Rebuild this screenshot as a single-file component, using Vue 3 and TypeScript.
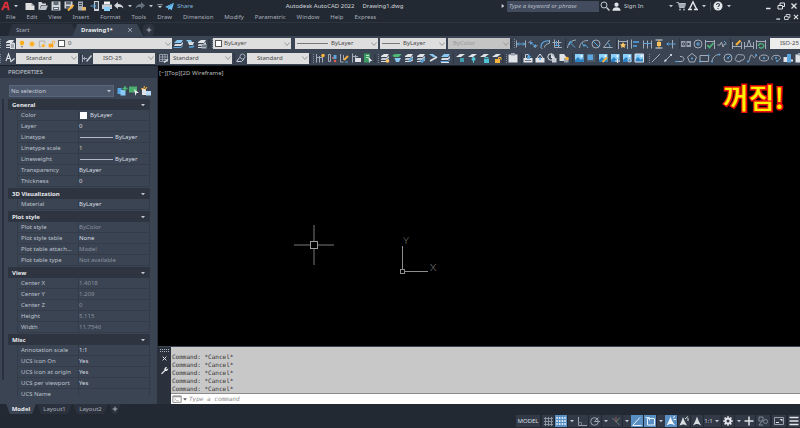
<script setup lang="ts">
import { ref } from 'vue'

interface Row { label: string; value: string; dim?: boolean; line?: boolean; swatch?: boolean; warm?: boolean }
interface Section { title: string; rows: Row[] }
interface StatusItem { icon: string; name: string; on?: boolean; drop?: boolean }

const G = '#a2abb7'
const B = '#5ba6de'
const Y = '#f7b23c'
const GR = '#4fb877'

const line = (d: string, c = G, w = 1): string =>
  `<path d="${d}" fill="none" stroke="${c}" stroke-width="${w}"/>`
const fill = (d: string, c = G): string => `<path d="${d}" fill="${c}"/>`
const ring = (x: number, y: number, r: number, c = G): string =>
  `<circle cx="${x}" cy="${y}" r="${r}" fill="none" stroke="${c}"/>`
const dot = (x: number, y: number, r: number, c = B): string =>
  `<circle cx="${x}" cy="${y}" r="${r}" fill="${c}"/>`

const sheets = fill('M2 4l3-2h5l-2 3H2z', '#e2e5e8') + fill('M2 7l1-1h4l3-2v2L7 8H2z', '#c3c9d0') + fill('M2 10V9h5l3-2v1.500L7 10z', '#d8dce0')
const blueSheets = fill('M2 5l3-3h6L9 5z', '#8bc9f5') + fill('M2 8l1-2h6l2-2v2L9 8z', '#d8dce0') + fill('M1 10l1-1h7l2-2v1l-2 2z', B)
const flatSheet = fill('M2 5l4-3h5L7 5z', '#e2e5e8')
const picture = fill('M2 2h8.500v8H2z', '#8bd0fa') + fill('M2 10V8l3-3 3 3 1-1.500 1.500 1.500v2z', '#2b82c4') + dot(8.500, 4, 1, '#fff')
const dimBase = line('M1.500 2v9M10.500 2v9M2 3.500h8')

const glyphs: Record<string, string> = {
  newFile: fill('M1.500 3h6l3 3v4h-9z', '#e0e0e0') + fill('M7.500 3v3h3z', '#9aa2ac'),
  open: fill('M1.500 2h3l1 1.500H9V5H4L2.500 10h-1z', '#d5d9dd') + fill('M4.500 5.500H11L9 10H2.500z', '#b9c0c7'),
  save: fill('M1.500 1.500h9v9h-9z', '#d0d4d8') + fill('M3.500 1.500h5V5h-5zM3 7h6v3.500H3z', '#606b78') + fill('M4 8h4v1H4z', '#e7eaed'),
  saveAs: fill('M1.500 1.500h8v7h-8z', '#d0d4d8') + fill('M3 1.500h5v3H3zM3 6h4v3H3z', '#606b78') + line('M5 10.500L10.500 5', Y, 2),
  webOpen: fill('M2 1.500h5v9H2z', '#a4acb6') + fill('M3 3h3v1H3zM3 5h3v1H3z', '#3a4452') + fill('M6 7h4v3.500H6z', '#e2b66d'),
  webSave: fill('M5 1h5v10H5z', '#cbd0d6') + fill('M6 2h3v7H6z', '#3b4554') + line('M1.500 6h5M4.500 4l2 2-2 2', B),
  print: fill('M3 1.500h6v3H3z', '#f1f1f1') + fill('M1 4.500h10V9H1z', '#c8cdd3') + fill('M3 7h6v4H3z', '#8bd0fa'),
  undo: fill('M1 5.500L5 2v2c3 0 5 1.500 5.500 4.500C9 7 7.500 6.800 5 7v2z', '#d0d5da'),
  redo: fill('M11 5.500L7 2v2C4 4 2 5.500 1.500 8.500 3 7 4.500 6.800 7 7v2z', '#66707d'),
  custom: line('M2 4h8', '#d0d5da') + fill('M3 6h6L6 9z', '#d0d5da'),
  plane: fill('M0 6.500L12 1 9 11 6 9 4.500 11 4 8z', '#6cc0f5') + line('M4 8l6-5.500', '#2a6f9e', .7),
  drop: fill('M3 4.500h6L6 8z', '#c3c9d0'),
  play: fill('M4 3l4 3-4 3z', '#d5d9dd'),
  search: ring(5, 5, 3, '#c3c9d0') + line('M7.500 7.500l3 3', '#c3c9d0', 1.500),
  user: dot(6, 4, 2.300, '#dfe3e7') + fill('M1.500 10.500c0-5 9-5 9 0z', '#dfe3e7'),
  cart: line('M1.500 2.500h2l1 5h5l1-4H4', '#b4bcc6') + fill('M4 4h6L9.500 7H4.500z') + dot(5, 9.500, 1, G) + dot(9, 9.500, 1, G),
  apps: line('M2 10L6 2l4 8M1 9.500h4M7 9.500h4', '#e3e6e9', 1.500),
  help: dot(6, 6, 4.500, '#e3e6e9') + line('M4.500 5c0-2 3-2 3 0 0 1-1.500 1-1.500 2M6 8v1', '#333c49', 1.100),
  min: line('M4 8.500h4.500', '#e3e6e9', 1.500),
  restore: line('M3 5.500h4.500v3.500H3zM5 5V3h4.500v3.500H8', '#e3e6e9'),
  close: line('M3.500 3.500l5 5M8.500 3.500l-5 5', '#e3e6e9', 1.300),
  closeDim: line('M3 3l6 6M9 3L3 9', '#a8b0ba', 1.200),
  plus: line('M6 2.500v7M2.500 6h7', '#aab2bc', 1.500),
  layerProps: sheets + fill('M6 5h5v6H6z', '#d8dce0') + line('M7 7h3M7 9h3', '#555f6d', .8),
  layerA: blueSheets,
  layerB: fill('M2 2h5l1 2H4z', '#8bc9f5') + fill('M4 4h6L9 7H5z', '#d8dce0') + line('M5 9h3l2-1', B, 1.500),
  layerC: sheets + fill('M5.500 6h5v4.500h-5z', '#aab2bc') + line('M6 8h4', '#3b4453'),
  bulb: fill('M6 1C2 1 2 5 4 7v1h4V7c2-2 2-6-2-6z', '#ffae1b') + fill('M4.500 9h3v2h-3z', '#8d8d8d'),
  sun: dot(6, 6, 3, '#ffae1b') + line('M6 1v10M1 6h10M2.500 2.500l7 7M9.500 2.500l-7 7', '#ffae1b', .9),
  freeze: line('M2 1.500h8.500v4M2 2v8h3', '#8b8b8b', .8) + dot(8, 8.500, 2, '#ffae1b') + line('M8 5.500v6M5 8.500h6', '#ffae1b', .7),
  lock: fill('M1 5.500h7V11H1z', '#ffa21b') + line('M6.500 5.500V3c0-2 3.500-2 3.500 0v2', '#ffa21b', 1.200),
  textStyle: line('M2 9l2.500-7L7 9M3 6.500h3', '#dfe3e7', 1.100) + line('M6.500 10L10.500 6.500', '#dfe3e7', 1.200),
  dimStyle: line('M1.500 3v7M2 6.500h4M4 5L2.500 6.500 4 8', G) + line('M5.500 9.500l5-6', '#c8cdd3', 1.500),
  tableStyle: line('M1.500 2.500h8v7h-8zM1.500 5h8M1.500 7.500h8M4.500 2.500v7M7 2.500v7', G, .8) + line('M6 10.500l4-3', '#dfe3e7', 1.300),
  leaderStyle: ring(7.500, 4.500, 2.500) + line('M1.500 9.500l3-4M2 9.500h4.500L9 7', '#c8cdd3'),
  dLinear: line('M1.500 2.500v7M10.500 2.500v7') + line('M2 6h8M4 4.500L2.500 6 4 7.500M8 4.500L9.500 6 8 7.500', B),
  dAligned: line('M1.500 5L4 2.500M7.500 10L10.500 7') + line('M3.500 4.500l5 4M3.500 6.500v-2h2M6.500 8.500h2v-2', B),
  dArc: line('M1.500 9.500l2 1M10.500 2v3') + line('M2 9C2 5 5 2.500 10 3', B, 1.200) + line('M5.500 9.500c0-2 2-4 5-4'),
  dOrd: line('M3.500 1.500v8H11M1.500 4.500h9M7.500 2v7.500') + line('M4 7.500h5M5.500 3v5', B),
  dRadius: line('M1.500 10C2 5 5 2.500 10 2') + line('M3.500 4l5.500 5.500M3.500 7V4h3', B),
  dJog: line('M1.500 10C2 5 5 2.500 10 2.500') + line('M4 4.500l2 4 1-2 3 3.500', B),
  dDia: ring(6, 6, 4) + line('M3 3l6 6', B),
  dAng: line('M1.500 9.500h9M1.500 9.500L7.500 2') + line('M5 4.500c2 1 3 3 3 5', B),
  quick: dimBase + fill('M6 4l1 2 2 .500-1.500 1.500.500 2L6 9l-2 1 .500-2L3 6.500 5 6z', '#ffc766'),
  baseline: line('M2.500 1.500v9') + fill('M4 3h6v2H4zM4 7h4v2H4z', '#4c8fc4'),
  cont: line('M2.500 2.500v8M6.500 2.500v8M10.500 2.500v8') + line('M3 5.500h7', B),
  space: line('M2.500 2h7M2.500 10h7', G, 1.500) + fill('M4 4h4v4H4z', '#ffc766') + line('M6 2v8', Y),
  brk: line('M7.500 2v8.500') + line('M1.500 6h9M3.500 4.500L2 6l1.500 1.500', B),
  tol: fill('M1 3h10v6H1z', '#98a1ad') + line('M6 3v6', '#38414f') + ring(3.500, 6, 1.200, '#38414f') + fill('M7.500 5h2v2h-2z', '#38414f'),
  center: ring(6, 6, 4) + line('M6 4v4M4 6h4', B),
  inspect: dimBase + line('M3.500 7l2 2.500L9.500 5', GR, 1.700),
  jogLine: line('M1.500 7h2.500l1.500-3 1.500 5 1.500-3h2') + line('M8 3l2 2', B),
  dEdit: line('M1.500 4v7M10.500 4v7M2 8.500h8') + line('M5 7l4.500-4.500', Y, 2),
  tEdit: line('M1.500 4v7M10.500 4v7M2 8.500h8M4 8l2-6 2 6'),
  update: dimBase + line('M3.500 8c0-3 4-3 5-1M9 7c0 3-3 4-5 2', GR, 1.300),
  rA: line('M2.500 2v8.500M5.500 4v6.500M8.500 5v5.500M3 5.500h5') + dot(9, 3.500, 1.800, Y),
  rB: line('M2.500 2.500h2v7h-2z') + line('M6 6h3', '#e0604c', 1.500) + fill('M7.500 3h3v4h-3z', B) + dot(9, 9, 1.300, '#e0604c'),
  rC: line('M2.500 2v8h3M5.500 3v5') + line('M6 8l4-4', Y, 1.800) + line('M7 10h3', B),
  rD: line('M2.500 1.500v9M5.500 3v5M3 4.500h5') + fill('M5 6h6v4H5z', '#dfe3e7'),
  rE: fill('M2 1.500h6v9H2z', '#3b9a62') + line('M4 3.500h3M4 5.500h2', '#bfe4cd') + fill('M6 4.500l4.500 4.500H8.500l-1 2z', '#dfe3e7'),
  lA: sheets + dot(8.500, 9, 1.800, '#ffc766'),
  lB: fill('M1.500 3l3-1h6L8 5H2.500z', GR) + fill('M3.500 6h6.500L8 10H5z', '#8bc9f5'),
  lC: sheets + line('M6 9l3-3', B, 2),
  lD: sheets + line('M5 8l2 2 3-4', B, 1.500),
  lE: fill('M2 2h4l4 3H6z', '#8bc9f5') + line('M3 9l7-4', '#dfe3e7', 1.800),
  lF: blueSheets + line('M2 10.500h8', '#dfe3e7'),
  fA: flatSheet + fill('M6 6h4v4H6z', '#3f9fae'),
  fB: flatSheet + dot(7.500, 7, 2, '#51c4d3') + line('M7.500 7v4', '#51c4d3'),
  fC: flatSheet + fill('M6 7h5v4H6z', '#51c4d3') + line('M7 7V5.500h3V7', '#51c4d3'),
  fD: flatSheet + fill('M5 7h5v4H5z', Y) + line('M8.500 7V5.500h2.500V8', Y),
  clip: fill('M1.500 2.500h9v8h-9z', '#dfe3e7') + fill('M4 1h4v2.500H4z', '#98a1ad'),
  cA: fill('M1.500 6h9v4.500h-9z', '#dfe3e7') + line('M3.500 6V2.500h3V6', '#c8cdd3') + fill('M6 2l3.500 3H8v2H5z', B) + line('M3 8.500h6', '#6b7583'),
  cB: fill('M1.500 6h9v4.500h-9z', '#dfe3e7') + line('M3 6l3-4 3 4', '#dfe3e7') + line('M6 5v3', B, 1.500),
  cC: ring(5, 5, 3.200, '#dfe3e7') + fill('M5 1.500L9 6H5z', '#dfe3e7') + fill('M6 6h4.500v4.500H6z', '#c8cdd3'),
  cD: fill('M1.500 2h4.500l3 4v3H1.500z', '#dfe3e7') + fill('M6 6h4.500v4.500H6z', '#98a1ad') + dot(9, 6.500, 1.800, Y),
  pA: picture,
  pB: fill('M2 2h8.500v8H2z', '#4f5a69') + fill('M2.500 2.500h5.500v5.500H2.500z', B),
  pC: picture + line('M5.500 10l4.500-4.500', Y, 2),
  pD: picture + line('M6 9h5M8.500 6.500v4.500', '#dfe3e7', 1.200),
  pE: picture + dot(8.500, 8.500, 2, '#c8cdd3') + dot(8.500, 8.500, 1, '#2b82c4'),
  pF: picture + line('M2 2h8.500v8H2z', '#dfe3e7'),
  segment: line('M2 10l8-8'),
  xline: line('M2 10l8-8') + dot(3.500, 8.500, 1.100, '#dfe3e7') + dot(9, 3, 1.100, '#dfe3e7'),
  pline: line('M1.500 9.500H7c4 0 4-5 0-5H6') + line('M1.500 9.500H5', B),
  poly: line('M6 1.500l4.500 3.500-2 5h-5l-2-5z') + dot(6, 6.500, 1),
  rect: line('M2 3.500h8.500v6H2z') + dot(2, 9.500, 1) + dot(10.500, 3.500, 1),
  arc: line('M2 10C2 6 5 2.500 10 2.500') + dot(2, 9.500, 1) + dot(9.500, 2.500, 1),
  circle: ring(6, 6, 4) + line('M6 6l3-3', B) + dot(6, 6, 1),
  cloud: line('M3 9C.500 9 1 6 2 6c0-4 4-4 5-3 3-1 4.500 2 3 4-1 2-3 1-3 1l-1 2z'),
  spline: line('M2 9.500C4 9.500 3.500 3 5.500 3s2 6 5 0') + dot(2, 9.500, 1) + dot(10, 3, 1),
  ellipse: `<ellipse cx="6" cy="6" rx="4.500" ry="3" fill="none" stroke="${G}"/>` + dot(6, 6, 1),
  elArc: line('M2.500 8C0 5 4 2.500 8 3.500s2.500 4-.500 5.500') + dot(6, 6, 1) + dot(7, 9, 1),
  insert: fill('M1.500 5h5v5h-5z', '#dfe3e7') + fill('M5 2h4v8.500H5z', B) + line('M9 8.500h2', '#dfe3e7', 2),
  addPick: fill('M1.500 3h4v6h-4z', '#57a9e5') + fill('M4.500 5h5v5.500h-5z', '#8bc9f5') + line('M9 1v5M6.500 3.500h5', GR, 1.500),
  select: fill('M1 1.500h8v6H1z', '#4aae6d') + fill('M6 4l5 4H8.500L7.500 11z', '#e6e9ec'),
  filter: fill('M2 4h4v6H2z', '#e0e3e6') + fill('M6 6h5v4.500H6z', '#b8dcf7') + line('M4 1l1.500 3M1 4l3-1M7 2L5 5', Y),
  wrench: line('M2 10.500l5-5', '#e3e6e9', 1.800) + fill('M6 6.500C5 3 7 1 9.500 1.500L8 3.500 9 4.500l2-1.500c0 3-2 4.500-5 3.500z', '#e3e6e9'),
  prompt: line('M1 2.500h10v7.500H1z', '#7b7b7b') + fill('M1 2h10v2H1z', '#9a9a9a') + line('M3 5.500l1.500 1L3 7.500M5 8h3', '#888', .7),
  grid: line('M2 3.500h9M2 6.500h9M2 9.500h9M3.500 2v9M6.500 2v9M9.500 2v9', '#8a94a1'),
  snap: [3, 6, 9].map(y => [2, 4.700, 7.400, 10].map(x => dot(x, y, .9, '#eaf4fc')).join('')).join(''),
  ortho: line('M2.500 2v8.500H11', '#98a1ad') + line('M2.500 7.500h3v3', '#707b89'),
  polar: ring(5.500, 6.500, 3.800, '#98a1ad') + line('M5.500 6.500h5.500M5.500 6.500l4-4', '#98a1ad'),
  iso: line('M2.500 3l7 7', '#6f7a88') + line('M6 2v5', '#a8545a') + line('M6 7l3.500-4', '#5c8b69'),
  track: line('M2 10l7-7.500M1.500 10.500h9', '#e6f1fa'),
  osnap: line('M3.500 3.500h7v6.500h-7z', '#e6f1fa') + line('M1.500 2.500h4v3', '#cfe5f7'),
  annoA: fill('M5.500 1.500L7 5.500l3 5L7 9H4.500L1.500 10.500 4 5.500z', '#f1f6fa') + line('M8 2.500l2-1M8.500 4.500H11', '#f1f6fa'),
  annoB: fill('M5 2l1.500 4 2.500 4.500L6 9.500H4.500L1.500 10.500 3.500 6z', '#d9dde1') + line('M7 4l3-2.500M10 3v3', '#d9dde1'),
  annoC: fill('M6 1.500l1.500 4 2.500 5L7 9H5l-3 1.500 2.500-5z', '#d9dde1'),
  gear: ring(6, 6, 2.500, '#e3e6e9').replace('stroke=', 'stroke-width="2" stroke=') + line('M6 1.200v2M6 8.800v2M1.200 6h2M8.800 6h2M2.600 2.600l1.300 1.300M8.100 8.100l1.300 1.300M9.400 2.600L8.100 3.900M3.900 8.100L2.600 9.400', '#e3e6e9', 1.500),
  bigPlus: line('M6 1.500v9M1.500 6h9', '#dfe3e7', 1.500),
  isolate: line('M2 2h4v4H2zM5 6l-3 4h4', '#7e8997') + ring(8.500, 6.500, 2, '#7e8997'),
  clean: line('M1.500 2.500h9v7h-9z', '#98a1ad') + fill('M6.500 4H9.500v2.500z', '#dfe3e7') + line('M3 7.500h3', '#dfe3e7'),
  menu: line('M1.500 2.500h9M1.500 6h9M1.500 9.500h9', '#e3e6e9', 1.300),
}

const fileIcons = ['newFile', 'open', 'save', 'saveAs', 'webOpen', 'webSave', 'print', 'undo']
const menus = ['File', 'Edit', 'View', 'Insert', 'Format', 'Tools', 'Draw', 'Dimension', 'Modify', 'Parametric', 'Window', 'Help', 'Express']

const dimTools = ['dLinear', 'dAligned', 'dArc', 'dOrd', '|', 'dRadius', 'dJog', 'dDia', 'dAng', '|', 'quick', 'baseline', 'cont', 'space', 'brk', '|', 'tol', 'center', 'inspect', 'jogLine', '|', 'dEdit', 'tEdit', 'update']
const rowTools = ['rA', 'rB', 'rC', 'rD', 'rE', ':', 'lA', 'lB', 'lC', 'lD', 'lE', 'lF', '|', 'fA', 'fB', 'fC', 'fD', ':', 'clip', '|', 'cA', 'cB', 'cC', 'cD', '|', 'pA', 'pB', 'pC', 'pD', 'pE', 'pF', ':', 'segment', 'xline', 'pline', 'poly', 'rect', 'arc', 'circle', 'cloud', 'spline', 'ellipse', 'elArc', 'insert', 'clip']

const sections: Section[] = [
  { title: 'General', rows: [
    { label: 'Color', value: 'ByLayer', swatch: true },
    { label: 'Layer', value: '0' },
    { label: 'Linetype', value: 'ByLayer', line: true },
    { label: 'Linetype scale', value: '1', warm: true },
    { label: 'Lineweight', value: 'ByLayer', line: true },
    { label: 'Transparency', value: 'ByLayer' },
    { label: 'Thickness', value: '0' },
  ] },
  { title: '3D Visualization', rows: [{ label: 'Material', value: 'ByLayer' }] },
  { title: 'Plot style', rows: [
    { label: 'Plot style', value: 'ByColor', dim: true },
    { label: 'Plot style table', value: 'None' },
    { label: 'Plot table attach...', value: 'Model', dim: true },
    { label: 'Plot table type', value: 'Not available', dim: true },
  ] },
  { title: 'View', rows: [
    { label: 'Center X', value: '1.4018', dim: true },
    { label: 'Center Y', value: '1.209', dim: true },
    { label: 'Center Z', value: '0', dim: true },
    { label: 'Height', value: '5.115', dim: true },
    { label: 'Width', value: '11.7546', dim: true },
  ] },
  { title: 'Misc', rows: [
    { label: 'Annotation scale', value: '1:1' },
    { label: 'UCS icon On', value: 'Yes' },
    { label: 'UCS icon at origin', value: 'Yes' },
    { label: 'UCS per viewport', value: 'Yes' },
    { label: 'UCS Name', value: '' },
  ] },
]

const statusItems: StatusItem[] = [
  { icon: 'grid', name: 'Grid' },
  { icon: 'snap', name: 'Snap', on: true, drop: true },
  { icon: 'ortho', name: 'Ortho' },
  { icon: 'polar', name: 'Polar tracking', drop: true },
  { icon: 'iso', name: 'Isometric drafting', drop: true },
  { icon: 'track', name: 'Object snap tracking', on: true },
  { icon: 'osnap', name: 'Object snap', on: true, drop: true },
  { icon: 'annoA', name: 'Annotation visibility', on: true },
  { icon: 'annoB', name: 'Auto scale' },
  { icon: 'annoC', name: 'Annotation scale' },
]

const history = Array.from({ length: 5 }, () => 'Command: *Cancel*')
const layouts = ['Model', 'Layout1', 'Layout2']
const activeLayout = ref('Model')
const command = ref('')
const query = ref('')
</script>

<template>
  <div class="app">
    <header>
      <div class="titlebar">
        <div class="quick">
          <button class="logo" aria-label="Application menu"><svg viewBox="0 0 12 12"><path d="M0 11L4.500 1H8l2.500 10H8L7.400 8H4L2.500 11zM4.800 6H7L6.200 2.800z" /></svg></button>
          <button class="slim" aria-label="Application options"><svg viewBox="0 0 12 12" v-html="glyphs.drop" /></button>
          <span class="space" />
          <button v-for="i in fileIcons" :key="i" class="ic wide" :aria-label="i"><svg viewBox="0 0 12 12" v-html="glyphs[i]" /></button>
          <button class="slim" aria-label="Undo list"><svg viewBox="0 0 12 12" v-html="glyphs.drop" /></button>
          <button class="ic" aria-label="Redo"><svg viewBox="0 0 12 12" v-html="glyphs.redo" /></button>
          <button class="slim" aria-label="Redo list"><svg viewBox="0 0 12 12" v-html="glyphs.drop" /></button>
          <button class="slim" aria-label="Customize"><svg viewBox="0 0 12 12" v-html="glyphs.custom" /></button>
          <button class="share"><svg viewBox="0 0 12 12" v-html="glyphs.plane" />Share</button>
        </div>
        <div class="caption"><span>Autodesk AutoCAD 2022</span><span>Drawing1.dwg</span></div>
        <div class="account">
          <button class="slim" aria-label="Expand search"><svg viewBox="0 0 12 12" v-html="glyphs.play" /></button>
          <input v-model="query" class="search" type="text" aria-label="Search" placeholder="Type a keyword or phrase">
          <button class="ic" aria-label="Find"><svg viewBox="0 0 12 12" v-html="glyphs.search" /></button>
          <button class="sign"><svg viewBox="0 0 12 12" v-html="glyphs.user" />Sign In<svg class="end" viewBox="0 0 12 12" v-html="glyphs.drop" /></button>
          <button class="ic" aria-label="Store"><svg viewBox="0 0 12 12" v-html="glyphs.cart" /></button>
          <button class="ic" aria-label="Apps"><svg viewBox="0 0 12 12" v-html="glyphs.apps" /></button>
          <button class="slim" aria-label="Apps list"><svg viewBox="0 0 12 12" v-html="glyphs.drop" /></button>
          <span class="rule" />
          <button class="ic" aria-label="Help"><svg viewBox="0 0 12 12" v-html="glyphs.help" /></button>
          <button class="slim" aria-label="Help list"><svg viewBox="0 0 12 12" v-html="glyphs.drop" /></button>
        </div>
        <div class="win">
          <button v-for="i in ['min', 'restore', 'close']" :key="i" class="ic" :aria-label="i"><svg viewBox="0 0 12 12" v-html="glyphs[i]" /></button>
        </div>
      </div>

      <nav class="menubar">
        <a v-for="m in menus" :key="m" href="#">{{ m }}</a>
        <div class="docwin">
          <button v-for="i in ['min', 'restore', 'close']" :key="i" class="slim" :aria-label="'Drawing ' + i"><svg viewBox="0 0 12 12" v-html="glyphs[i]" /></button>
        </div>
      </nav>

      <div class="filetabs">
        <button class="ftab">Start</button>
        <button class="ftab active">Drawing1*<svg viewBox="0 0 12 12" v-html="glyphs.closeDim" /></button>
        <button class="add" aria-label="New tab"><svg viewBox="0 0 12 12" v-html="glyphs.plus" /></button>
      </div>

      <div class="toolbar">
        <span class="grip" />
        <button class="ic" aria-label="Layer properties"><svg viewBox="0 0 12 12" v-html="glyphs.layerProps" /></button>
        <label class="combo layer">
          <svg v-for="i in ['bulb', 'sun', 'freeze', 'lock']" :key="i" viewBox="0 0 12 12" v-html="glyphs[i]" />
          <i class="swatch" />
          <select aria-label="Layer"><option>0</option></select>
          <svg class="chev" viewBox="0 0 8 8"><path d="M1.500 2.500L4 5.500l2.500-3" /></svg>
        </label>
        <button v-for="i in ['layerA', 'layerB', 'layerC']" :key="i" class="ic" :aria-label="i"><svg viewBox="0 0 12 12" v-html="glyphs[i]" /></button>
        <span class="grip wide" />
        <label class="combo color">
          <i class="swatch" />
          <select aria-label="Color"><option>ByLayer</option></select>
          <svg class="chev" viewBox="0 0 8 8"><path d="M1.500 2.500L4 5.500l2.500-3" /></svg>
        </label>
        <label class="combo linetype">
          <i class="stroke long" />
          <select aria-label="Linetype"><option>ByLayer</option></select>
          <svg class="chev" viewBox="0 0 8 8"><path d="M1.500 2.500L4 5.500l2.500-3" /></svg>
        </label>
        <label class="combo weight">
          <i class="stroke" />
          <select aria-label="Lineweight"><option>ByLayer</option></select>
          <svg class="chev" viewBox="0 0 8 8"><path d="M1.500 2.500L4 5.500l2.500-3" /></svg>
        </label>
        <label class="combo plot">
          <select aria-label="Plot style" disabled><option>ByColor</option></select>
          <svg class="chev" viewBox="0 0 8 8"><path d="M1.500 2.500L4 5.500l2.500-3" /></svg>
        </label>
        <span class="grip wide" />
        <template v-for="(t, n) in dimTools" :key="n">
          <span v-if="t === '|'" class="sep" />
          <button v-else class="ic" :aria-label="t"><svg viewBox="0 0 12 12" v-html="glyphs[t]" /></button>
        </template>
        <span class="sep" />
        <label class="combo last">
          <select aria-label="Current dimension style"><option>ISO-25</option></select>
        </label>
      </div>

      <div class="toolbar second">
        <span class="grip" />
        <button class="ic" aria-label="Text style"><svg viewBox="0 0 12 12" v-html="glyphs.textStyle" /></button>
        <label class="combo style">
          <select aria-label="Text style list"><option>Standard</option></select>
          <svg class="chev" viewBox="0 0 8 8"><path d="M1.500 2.500L4 5.500l2.500-3" /></svg>
        </label>
        <span class="sep" />
        <button class="ic" aria-label="Dimension style"><svg viewBox="0 0 12 12" v-html="glyphs.dimStyle" /></button>
        <label class="combo style">
          <select aria-label="Dimension style list"><option>ISO-25</option></select>
          <svg class="chev" viewBox="0 0 8 8"><path d="M1.500 2.500L4 5.500l2.500-3" /></svg>
        </label>
        <span class="sep" />
        <button class="ic" aria-label="Table style"><svg viewBox="0 0 12 12" v-html="glyphs.tableStyle" /></button>
        <label class="combo style tight">
          <select aria-label="Table style list"><option>Standard</option></select>
          <svg class="chev" viewBox="0 0 8 8"><path d="M1.500 2.500L4 5.500l2.500-3" /></svg>
        </label>
        <span class="sep" />
        <button class="ic" aria-label="Leader style"><svg viewBox="0 0 12 12" v-html="glyphs.leaderStyle" /></button>
        <label class="combo style">
          <select aria-label="Leader style list"><option>Standard</option></select>
          <svg class="chev" viewBox="0 0 8 8"><path d="M1.500 2.500L4 5.500l2.500-3" /></svg>
        </label>
        <span class="grip wide" />
        <template v-for="(t, n) in rowTools" :key="n">
          <span v-if="t === '|'" class="sep" />
          <span v-else-if="t === ':'" class="grip wide" />
          <button v-else class="ic" :aria-label="t"><svg viewBox="0 0 12 12" v-html="glyphs[t]" /></button>
        </template>
      </div>
    </header>

    <main>
      <aside class="palette">
        <h2>PROPERTIES</h2>
        <div class="picker">
          <label class="selection">
            <select aria-label="Selection"><option>No selection</option></select>
            <svg viewBox="0 0 12 12" v-html="glyphs.drop" />
          </label>
          <button v-for="i in ['addPick', 'select', 'filter']" :key="i" class="ic" :aria-label="i"><svg viewBox="0 0 12 12" v-html="glyphs[i]" /></button>
        </div>
        <div class="scroll">
          <div class="track" />
          <div class="groups">
            <section v-for="s in sections" :key="s.title">
              <h3>{{ s.title }}<svg viewBox="0 0 12 12" v-html="glyphs.drop" /></h3>
              <table>
                <tbody>
                  <tr v-for="r in s.rows" :key="r.label">
                    <th scope="row">{{ r.label }}</th>
                    <td :class="{ dim: r.dim, warm: r.warm }">
                      <div class="cell"><i v-if="r.swatch" class="swatch" /><i v-if="r.line" class="stroke" />{{ r.value }}</div>
                    </td>
                  </tr>
                </tbody>
              </table>
            </section>
          </div>
        </div>
      </aside>

      <div class="work">
        <div class="canvas">
          <p class="view">[−][Top][2D Wireframe]</p>
          <p class="notice">꺼짐!</p>
          <svg class="drawing" aria-hidden="true">
            <g class="cross">
              <path d="M136 179h17M159 179h17M156 159v17M156 182v17" />
            </g>
            <rect class="box" x="152.500" y="175.500" width="7" height="7" />
            <g class="ucs">
              <path d="M244.500 203V180M247 205.500h23" />
              <rect x="242.500" y="203.500" width="4" height="4" />
            </g>
            <text x="245" y="178">Y</text>
            <text x="272" y="205">X</text>
          </svg>
        </div>
        <div class="cmd">
          <div class="side">
            <span class="dots" />
            <button class="ic" aria-label="Close command line"><svg viewBox="0 0 12 12" v-html="glyphs.close" /></button>
            <button class="ic" aria-label="Customize command line"><svg viewBox="0 0 12 12" v-html="glyphs.wrench" /></button>
          </div>
          <div class="console">
            <div class="log"><div v-for="(h, n) in history" :key="n">{{ h }}</div></div>
            <div class="entry">
              <svg viewBox="0 0 12 12" v-html="glyphs.prompt" />
              <svg class="arrow" viewBox="0 0 8 8"><path d="M1.500 3h5L4 6z" /></svg>
              <input v-model="command" type="text" aria-label="Command" placeholder="Type a command">
            </div>
          </div>
        </div>
      </div>
    </main>

    <footer>
      <div class="layouts">
        <button v-for="l in layouts" :key="l" :class="{ active: l === activeLayout }" @click="activeLayout = l">{{ l }}</button>
        <button class="more" aria-label="New layout"><svg viewBox="0 0 12 12" v-html="glyphs.plus" /></button>
      </div>
      <div class="status">
        <button class="mode">MODEL</button>
        <template v-for="s in statusItems" :key="s.icon">
          <button class="st" :class="{ on: s.on }" :aria-label="s.name"><svg viewBox="0 0 12 12" v-html="glyphs[s.icon]" /></button>
          <button v-if="s.drop" class="sd" :aria-label="s.name + ' options'"><svg viewBox="0 0 12 12" v-html="glyphs.drop" /></button>
        </template>
        <button class="scale">1:1<svg viewBox="0 0 12 12" v-html="glyphs.drop" /></button>
        <button class="st" aria-label="Workspace"><svg viewBox="0 0 12 12" v-html="glyphs.gear" /></button>
        <button class="sd" aria-label="Workspace options"><svg viewBox="0 0 12 12" v-html="glyphs.drop" /></button>
        <button class="st" aria-label="Monitor"><svg viewBox="0 0 12 12" v-html="glyphs.bigPlus" /></button>
        <button class="st roomy" aria-label="Isolate"><svg viewBox="0 0 12 12" v-html="glyphs.isolate" /></button>
        <button class="st roomy" aria-label="Clean screen"><svg viewBox="0 0 12 12" v-html="glyphs.clean" /></button>
        <button class="st" aria-label="Customization"><svg viewBox="0 0 12 12" v-html="glyphs.menu" /></button>
      </div>
    </footer>
  </div>
</template>

<style>
body { background: #222933; overflow: hidden; }
</style>

<style scoped>
.app {
  display: flex;
  flex-direction: column;
  height: 100vh;
  background: #222933;
  color: #c9ced5;
  font-family: "Noto Sans", "Noto Sans CJK KR", sans-serif;
  font-size: 6px;
  line-height: 8px;
}
*, *::before { box-sizing: border-box; }
button, select, input {
  margin: 0;
  padding: 0;
  border: 0;
  border-radius: 0;
  background: none;
  color: inherit;
  font: inherit;
  outline: 0;
}
select { appearance: none; min-width: 0; opacity: 1; }
svg { display: block; flex: none; }
a { color: inherit; text-decoration: none; }
p, h2, h3 { margin: 0; }
header { flex: none; border-bottom: 1px solid #1c222b; }

.ic { flex: none; width: 12px; height: 12px; display: flex; align-items: center; justify-content: center; }
.ic svg { width: 12px; height: 12px; }
.slim { flex: none; width: 9px; height: 12px; display: flex; align-items: center; justify-content: center; }
.slim svg { width: 8px; height: 8px; }

.titlebar { display: flex; align-items: center; height: 12px; }
.quick, .account, .win { display: flex; align-items: center; flex: none; }
.logo { width: 10px; margin-left: 1px; }
.logo svg { width: 10px; height: 10px; fill: #d9303a; }
.space { width: 4px; }
.quick .wide { width: 12px; margin-right: 1px; }
.quick .wide:nth-of-type(n+8) { margin-right: 0; }
.share { display: flex; align-items: center; gap: 3px; margin-left: 1px; color: #7fb5dc; }
.share svg { width: 9px; height: 9px; }
.caption { flex: 1; display: flex; justify-content: center; gap: 8px; padding-right: 2px; color: #d3d7dc; white-space: pre; }
.search { width: 92px; height: 11px; padding: 0 2px; background: #434c5e; font-style: italic; }
.search::placeholder, .entry input::placeholder { color: #b5bcc6; opacity: 1; }
.sign { display: flex; align-items: center; gap: 2px; width: 64px; }
.sign svg { width: 11px; height: 11px; }
.sign .end { width: 8px; height: 8px; margin-left: auto; }
.rule { width: 1px; height: 9px; margin: 0 1px 0 2px; background: #3f4754; }
.win { gap: 1px; margin-left: 29px; }

.menubar { display: flex; align-items: center; gap: 11px; height: 11px; padding-left: 6px; border-bottom: 1px solid #2c343f; color: #a9b0ba; }
.docwin { display: flex; margin-left: auto; }
.docwin svg { width: 10px; height: 10px; }

.filetabs { display: flex; height: 13px; padding: 1px 0 0 8px; }
.ftab { display: flex; align-items: center; width: 70px; padding-left: 8px; background: #2d3440; color: #a9b0ba; clip-path: polygon(4px 0, calc(100% - 6px) 0, 100% 100%, 0 100%); }
.ftab.active { justify-content: space-between; margin-left: -5px; padding-right: 9px; background: #3b4453; color: #e6e9ec; font-weight: 700; }
.ftab svg { width: 8px; height: 8px; }
.add { display: flex; align-items: center; justify-content: center; width: 11px; background: #2d3440; border-radius: 4px; }
.add svg { width: 8px; height: 8px; }

.toolbar { display: flex; align-items: center; height: 14px; padding-top: 1px; background: #3b4453; overflow: hidden; }
.toolbar.second { height: 15px; }
.grip { flex: none; width: 4px; height: 9px; border-left: 1px dotted #7d8796; }
.grip.wide { width: 5px; border-left: 2px solid #323a48; border-right: 1px dotted #7d8796; }
.sep { flex: none; width: 3px; height: 11px; border-right: 1px solid #2e3643; }
.combo { flex: none; display: flex; align-items: center; height: 11px; padding-left: 2px; background: #dedede; color: #4b4b4b; }
.combo select { flex: 1; height: 11px; line-height: 11px; padding-left: 3px; }
.combo svg { width: 8px; height: 8px; }
.chev path { fill: none; stroke: #9a9a9a; }
.swatch { flex: none; width: 7px; height: 7px; border: 1px solid #555; background: #fff; }
.stroke { flex: none; width: 18px; height: 1px; background: #777; }
.stroke.long { width: 31px; }
.layer { gap: 2px; width: 156px; }
.layer select { padding-left: 1px; }
.color { width: 78px; margin-right: 4px; }
.color select { padding-left: 2px; }
.linetype { width: 83px; margin-right: 2px; }
.weight { width: 66px; margin-right: 2px; }
.plot { width: 62px; background: #c4c4c4; color: #999; }
.last { flex: 1 0 30px; background: #ececec; }
.last select { padding-left: 8px; }
.style { width: 62px; }
.style select { padding-left: 8px; }
.style.tight select { padding-left: 1px; }

main { flex: 1; min-height: 0; display: flex; }
.palette { flex: none; width: 158px; display: flex; flex-direction: column; padding-bottom: 8px; background: #3b4453; border-right: 1px solid #2a313d; }
.palette h2 { height: 12px; padding-left: 8px; background: #2f3643; font-size: 6px; font-weight: 400; line-height: 12px; color: #c9ced5; }
.picker { display: flex; align-items: center; padding: 7px 0 2px 9px; }
.selection { display: flex; align-items: center; width: 105px; height: 12px; margin-right: 2px; background: #4d586c; border: 1px solid #59657a; }
.selection select { flex: 1; padding-left: 1px; }
.selection svg { width: 8px; height: 8px; }
.scroll { flex: 1; min-height: 0; display: flex; }
.track { width: 2px; margin: 0 4px 16px 2px; background: #2a313c; }
.groups { flex: 1; margin-right: 7px; overflow: hidden; }
section + section { margin-top: 1px; }
h3 { display: flex; align-items: center; justify-content: space-between; height: 11px; padding: 0 3px 0 4px; background: #2e3440; color: #e6e9ec; font-size: 6px; font-weight: 700; }
h3 svg { width: 8px; height: 8px; }
table { width: calc(100% - 9px); margin-left: 9px; border-collapse: separate; border-spacing: 0; table-layout: fixed; border-left: 1px solid #343c4a; }
th, td { height: 11px; padding: 0 0 0 3px; border-bottom: 1px solid #343c4a; font-weight: 400; text-align: left; white-space: nowrap; line-height: 10px; }
th { width: 60px; color: #bcc2cb; }
td { padding-left: 0; border-left: 1px solid #343c4a; border-right: 1px solid #343c4a; color: #d8dce1; }
.dim { color: #8a929e; }
.warm { color: #e2d6ae; }
.cell { display: flex; align-items: center; height: 10px; }
.cell .swatch { margin: 0 3px 0 1px; border-color: #fff; }
.cell .stroke { width: 33px; margin: 0 2px 0 1px; background: #b6bcc6; }

.work { flex: 1; min-width: 0; display: flex; flex-direction: column; }
.canvas { flex: 1; position: relative; overflow: hidden; background: #000; }
.view { padding: 3px 0 0 1px; color: #bdbdbd; }
.notice {
  position: absolute;
  top: 13px;
  right: 16px;
  color: #fff200;
  font-family: "Noto Sans CJK KR", sans-serif;
  font-size: 28px;
  font-weight: 500;
  line-height: 36px;
  -webkit-text-stroke: 3px #e8100c;
  paint-order: stroke fill;
}
.drawing { position: absolute; inset: 0; width: 100%; height: 100%; }
.cross path { fill: none; stroke: #3c3c3c; stroke-width: 2px; }
.box { fill: none; stroke: #9a9a9a; }
.ucs path, .ucs rect { fill: none; stroke: #8e8e8e; }
.drawing text { fill: #8a8a8a; font-family: Lato, sans-serif; font-size: 10px; font-weight: 300; }

.cmd { flex: none; display: flex; height: 58px; border-top: 1px solid #3b4453; background: #2a313d; }
.side { flex: none; display: flex; flex-direction: column; align-items: center; width: 13px; padding-top: 2px; }
.dots { width: 9px; height: 3px; border-top: 1px dotted #a9b0ba; border-bottom: 1px dotted #a9b0ba; }
.side .ic svg { width: 9px; height: 9px; }
.console { flex: 1; display: flex; flex-direction: column; font-family: "DejaVu Sans Mono", "Liberation Mono", monospace; }
.log { flex: 1; display: flex; flex-direction: column; justify-content: flex-end; padding-left: 1px; background: #c8c8c8; color: #303030; border-bottom: 1px solid #8c8c8c; }
.entry { flex: none; display: flex; align-items: center; height: 10px; padding-left: 1px; background: #fff; }
.entry svg { width: 10px; height: 10px; }
.entry .arrow { width: 6px; height: 6px; fill: #555; }
.entry input { flex: 1; padding-left: 1px; font-style: italic; color: #333; }
.entry input::placeholder { color: #8a8a8a; }

footer { flex: none; }
.layouts { display: flex; height: 10px; padding-left: 6px; }
.layouts button { width: 35px; margin-right: 1px; background: #2b323d; color: #a9b0ba; clip-path: polygon(0 0, 100% 0, calc(100% - 4px) 100%, 4px 100%); }
.layouts .active { width: 30px; background: #3b4453; color: #e6e9ec; font-weight: 700; }
.layouts .more { display: flex; align-items: center; justify-content: center; width: 12px; }
.more svg { width: 8px; height: 8px; }
.status { display: flex; justify-content: flex-end; align-items: center; height: 14px; }
.status button { height: 12px; display: flex; align-items: center; justify-content: center; background: #323a47; }
.status svg { width: 12px; height: 12px; }
.status .sd svg, .status .scale svg { width: 8px; height: 8px; }
.status .mode { width: 24px; margin-right: 2px; color: #d9dde1; }
.st { width: 12px; margin-right: 1px; }
.st:last-child { margin-right: 0; }
.status .st.on { background: #5a8fc4; }
.sd { width: 8px; }
.status .roomy { width: 14px; margin-right: 2px; }
.scale { width: 17px; margin-right: 1px; }
</style>
